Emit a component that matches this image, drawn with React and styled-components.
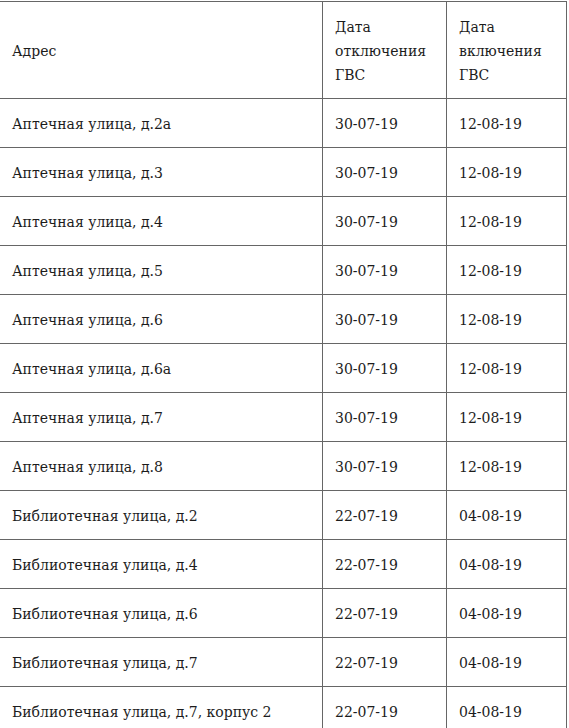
import React from "react";
import styled, { createGlobalStyle } from "styled-components";

const GlobalStyle = createGlobalStyle`
  html, body {
    margin: 0;
    padding: 0;
    background: #fff;
  }
  body {
    font-family: "DejaVu Serif", "Liberation Serif", serif;
    color: #1c1c1c;
  }
`;

const rows = [
  ["Аптечная улица, д.2а", "30-07-19", "12-08-19"],
  ["Аптечная улица, д.3", "30-07-19", "12-08-19"],
  ["Аптечная улица, д.4", "30-07-19", "12-08-19"],
  ["Аптечная улица, д.5", "30-07-19", "12-08-19"],
  ["Аптечная улица, д.6", "30-07-19", "12-08-19"],
  ["Аптечная улица, д.6а", "30-07-19", "12-08-19"],
  ["Аптечная улица, д.7", "30-07-19", "12-08-19"],
  ["Аптечная улица, д.8", "30-07-19", "12-08-19"],
  ["Библиотечная улица, д.2", "22-07-19", "04-08-19"],
  ["Библиотечная улица, д.4", "22-07-19", "04-08-19"],
  ["Библиотечная улица, д.6", "22-07-19", "04-08-19"],
  ["Библиотечная улица, д.7", "22-07-19", "04-08-19"],
  ["Библиотечная улица, д.7, корпус 2", "22-07-19", "04-08-19"],
];

function App() {
  return (
    <>
      <GlobalStyle />
      <Wrap>
        <Table>
          <colgroup>
            <col style={{ width: 323 }} />
            <col style={{ width: 124 }} />
            <col style={{ width: 120 }} />
          </colgroup>
          <thead>
            <tr>
              <Cell>Адрес</Cell>
              <Cell>
                Дата
                <br />
                отключения
                <br />
                ГВС
              </Cell>
              <Cell>
                Дата
                <br />
                включения
                <br />
                ГВС
              </Cell>
            </tr>
          </thead>
          <tbody>
            {rows.map((r) => (
              <tr key={r[0]}>
                <Cell>{r[0]}</Cell>
                <Cell>{r[1]}</Cell>
                <Cell>{r[2]}</Cell>
              </tr>
            ))}
          </tbody>
        </Table>
      </Wrap>
    </>
  );
}

const Wrap = styled.div`
  padding-top: 1px;
  overflow: hidden;
  width: 569px;
`;

const Table = styled.table`
  border-collapse: collapse;
  table-layout: fixed;
  width: 568px;
  margin-left: -1px;
`;

const Cell = styled.td`
  border: 1px solid #666;
  padding: 13px 12px 11px;
  font-size: 14px;
  line-height: 24px;
  text-align: left;
  vertical-align: middle;
  white-space: nowrap;
`;

export default App;
